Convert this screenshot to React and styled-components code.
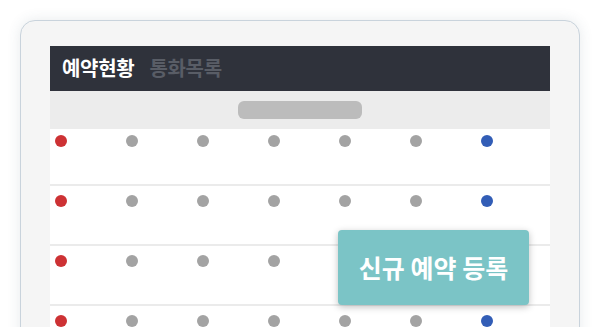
import React from "react";
import styled, { createGlobalStyle } from "styled-components";

const Global = createGlobalStyle`
  html, body { margin: 0; padding: 0; background: #ffffff; overflow: hidden; }
  body { width: 600px; height: 327px; font-family: "Noto Sans CJK KR", "Noto Sans", sans-serif; }
`;

const Page = styled.div`
  padding: 20px 20px 0 20px;
  height: 327px;
  box-sizing: border-box;
  overflow: hidden;
`;

const Frame = styled.div`
  width: 560px;
  height: 400px;
  box-sizing: border-box;
  border: 1px solid #c9d3dc;
  border-radius: 15px;
  background: #f5f5f5;
  box-shadow: 0 0 14px rgba(60, 80, 100, 0.12);
  padding: 25px 29px 0 29px;
`;

const Screen = styled.div`
  position: relative;
  width: 500px;
  background: #ffffff;
`;

const Header = styled.div`
  height: 45px;
  background: #2f323b;
  display: flex;
  align-items: center;
  gap: 15px;
  padding-left: 12px;
  padding-bottom: 2px;
  box-sizing: border-box;
`;

const Tab = styled.span`
  font-size: 20px;
  font-weight: 700;
  color: ${(p) => (p.$active ? "#ffffff" : "#595d66")};
  letter-spacing: -0.3px;
`;

const FilterBar = styled.div`
  height: 38px;
  background: #ececec;
  display: flex;
  align-items: center;
  justify-content: center;
`;

const Pill = styled.div`
  width: 124px;
  height: 18px;
  border-radius: 6px;
  background: #bcbcbc;
`;

const Rows = styled.div`
  display: flex;
  flex-direction: column;
`;

const Row = styled.div`
  height: 57px;
  box-sizing: border-box;
  border-bottom: 2px solid #ebebeb;
  margin-bottom: 3px;
  padding-left: 5px;
  padding-top: 6px;
  display: grid;
  grid-template-columns: repeat(7, 71px);
  align-items: start;
`;

const Dot = styled.span`
  width: 12px;
  height: 12px;
  border-radius: 50%;
  background: ${(p) => p.$color};
`;

const NewButton = styled.button`
  position: absolute;
  left: 288px;
  top: 184px;
  width: 191px;
  height: 75px;
  border: none;
  border-radius: 4px;
  background: #7bc4c6;
  color: #ffffff;
  font-family: "Noto Sans CJK KR", "Noto Sans", sans-serif;
  font-size: 25px;
  font-weight: 700;
  box-shadow: 0 2px 7px rgba(0, 0, 0, 0.25);
  padding: 0;
  padding-bottom: 2px;
  cursor: pointer;
`;

const colors = ["#cd3234", "#a3a3a3", "#a3a3a3", "#a3a3a3", "#a3a3a3", "#a3a3a3", "#325db6"];

export default function App() {
  return (
    <>
      <Global />
      <Page>
        <Frame>
          <Screen>
            <Header>
              <Tab $active>예약현황</Tab>
              <Tab>통화목록</Tab>
            </Header>
            <FilterBar>
              <Pill />
            </FilterBar>
            <Rows>
              {[0, 1, 2, 3].map((r) => (
                <Row key={r}>
                  {colors.map((c, i) => (
                    <Dot key={i} $color={c} />
                  ))}
                </Row>
              ))}
            </Rows>
            <NewButton>신규 예약 등록</NewButton>
          </Screen>
        </Frame>
      </Page>
    </>
  );
}
